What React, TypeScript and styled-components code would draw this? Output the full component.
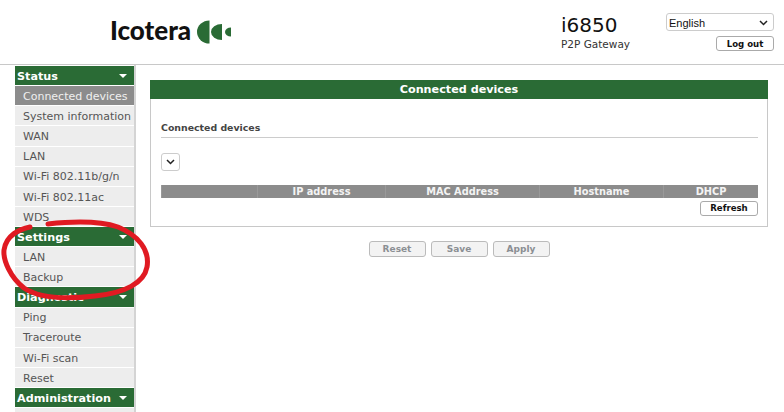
import styled, { createGlobalStyle } from "styled-components";

const GREEN = "#2a6b35";

const GlobalStyle = createGlobalStyle`
  html, body {
    margin: 0;
    padding: 0;
    height: 100%;
    overflow: hidden;
    background: #fff;
    font-family: "DejaVu Sans", Verdana, sans-serif;
    color: #444;
  }
`;

const Page = styled.div`
  position: relative;
  width: 784px;
  height: 412px;
  overflow: hidden;
`;

const Header = styled.div`
  display: flex;
  height: 64px;
  border-bottom: 1px solid #c8c8c8;
`;

const LogoBox = styled.div`
  display: flex;
  align-items: flex-start;
  gap: 5px;
  padding: 18px 0 0 110px;
  width: 561px;
  box-sizing: border-box;
`;

const LogoText = styled.div`
  font-family: "Lato", sans-serif;
  font-weight: 900;
  font-size: 26px;
  color: #111;
  line-height: 25px;
`;

const LogoMark = styled.svg`
  margin-top: 2px;
`;

const Model = styled.div`
  width: 105px;
  padding-top: 14px;
`;

const ModelName = styled.div`
  font-size: 20px;
  line-height: 22px;
  color: #111;
`;

const ModelType = styled.div`
  margin-top: 2px;
  font-size: 10.5px;
  line-height: 12px;
  color: #333;
`;

const HeaderRight = styled.div`
  display: flex;
  flex-direction: column;
  align-items: flex-end;
  width: 108px;
  padding-top: 13px;
`;

const LangSelect = styled.div`
  display: flex;
  align-items: center;
  justify-content: space-between;
  width: 108px;
  height: 18px;
  box-sizing: border-box;
  border: 1px solid #ccc;
  border-radius: 3px;
  padding: 1px 5px 0 2px;
  font-family: "Liberation Sans", sans-serif;
  font-size: 11px;
  color: #111;
`;

const Btn = styled.div<{ $off?: boolean; $w: number }>`
  display: flex;
  align-items: center;
  justify-content: center;
  box-sizing: border-box;
  width: ${(p) => p.$w}px;
  height: ${(p) => (p.$off ? 16 : 15)}px;
  border: 1px solid ${(p) => (p.$off ? "#bbb" : "#aaa")};
  border-radius: 3px;
  background: ${(p) => (p.$off ? "#f3f3f3" : "#fff")};
  color: ${(p) => (p.$off ? "#8b8f93" : "#111")};
  font-size: ${(p) => (p.$off ? 9 : 8.6)}px;
  font-weight: 700;
`;

const LogoutBtn = styled(Btn)`
  margin-top: 5px;
`;

const Body = styled.div`
  display: flex;
`;

const Sidebar = styled.div`
  flex: none;
  width: 119px;
  height: 346px;
  margin-left: 15px;
  padding-top: 1px;
  border-right: 2px solid #d4d4d4;
`;

const GroupHead = styled.div`
  display: flex;
  align-items: center;
  justify-content: space-between;
  box-sizing: border-box;
  height: 19.125px;
  margin-bottom: 1px;
  padding: 1px 7px 0 2px;
  background: ${GREEN};
  color: #fff;
  font-size: 11.2px;
  font-weight: 700;
`;

const Arrow = styled.span`
  width: 0;
  height: 0;
  border-left: 4px solid transparent;
  border-right: 4px solid transparent;
  border-top: 4px solid #fff;
`;

const Item = styled.div<{ $active?: boolean }>`
  display: flex;
  align-items: center;
  box-sizing: border-box;
  height: 19.125px;
  margin-bottom: 1px;
  padding: 1.5px 0 0 8px;
  background: ${(p) => (p.$active ? "#8c8c8c" : "#ededed")};
  color: ${(p) => (p.$active ? "#f0f0f0" : "#555")};
  font-size: 11px;
  white-space: nowrap;
`;

const Main = styled.div`
  flex: 1;
  padding: 15px 16px 0 14px;
`;

const Panel = styled.div`
  height: 147px;
  box-sizing: border-box;
  border: 1px solid #c8c8c8;
  border-top: none;
`;

const PanelTitle = styled.div`
  height: 18.5px;
  margin: 0 -1px;
  background: ${GREEN};
  color: #fff;
  text-align: center;
  font-size: 11.2px;
  font-weight: 700;
  line-height: 19px;
`;

const PanelBody = styled.div`
  padding: 22px 9px 0 10px;
`;

const SectionTitle = styled.div`
  font-size: 9.4px;
  font-weight: 700;
  line-height: 14px;
  padding-bottom: 2px;
  border-bottom: 1px solid #ccc;
  color: #444;
`;

const SmallSelect = styled.div`
  display: flex;
  align-items: center;
  justify-content: center;
  width: 19px;
  height: 18px;
  margin-top: 15px;
  box-sizing: border-box;
  border: 1px solid #ccc;
  border-radius: 3px;
`;

const TableHead = styled.div`
  display: grid;
  grid-template-columns: 96px 128px 154px 124px 1fr;
  height: 13px;
  margin-top: 14px;
  background: #8c8c8c;
`;

const HeadCell = styled.div`
  color: #f4f4f4;
  font-size: 9.8px;
  font-weight: 700;
  line-height: 13px;
  text-align: center;
  border-left: 1px solid #999;
  white-space: nowrap;
`;

const RefreshRow = styled.div`
  display: flex;
  justify-content: flex-end;
  margin-top: 3px;
`;

const Actions = styled.div`
  display: flex;
  justify-content: center;
  gap: 5px;
  margin-top: 14px;
`;

const Scribble = styled.svg`
  position: absolute;
  left: 0;
  top: 215px;
  pointer-events: none;
`;

const Chevron = () => (
  <svg width="9" height="6" viewBox="0 0 9 6">
    <path d="M1 1l3.5 3.5L8 1" fill="none" stroke="#222" strokeWidth="1.5" />
  </svg>
);

const Logo = () => (
  <LogoMark width="36" height="24" viewBox="0 0 36 24">
    <path d="M13.5 0.5A12.5 11.5 0 0 0 13.5 23.5z" fill={GREEN} />
    <path d="M26 4A11 8 0 0 0 26 20z" fill={GREEN} />
    <path d="M35 7.5A6 4.5 0 0 0 35 16.5z" fill={GREEN} />
  </LogoMark>
);

const groups = [
  { title: "Status", items: ["Connected devices", "System information", "WAN", "LAN", "Wi-Fi 802.11b/g/n", "Wi-Fi 802.11ac", "WDS"] },
  { title: "Settings", items: ["LAN", "Backup"] },
  { title: "Diagnostic", items: ["Ping", "Traceroute", "Wi-Fi scan", "Reset"] },
  { title: "Administration", items: [""] },
];

const columns = ["", "IP address", "MAC Address", "Hostname", "DHCP"];

export default function App() {
  return (
    <Page>
      <GlobalStyle />
      <Header>
        <LogoBox>
          <LogoText>Icotera</LogoText>
          <Logo />
        </LogoBox>
        <Model>
          <ModelName>i6850</ModelName>
          <ModelType>P2P Gateway</ModelType>
        </Model>
        <HeaderRight>
          <LangSelect>
            English
            <Chevron />
          </LangSelect>
          <LogoutBtn $w={58}>Log out</LogoutBtn>
        </HeaderRight>
      </Header>
      <Body>
        <Sidebar>
          {groups.map((g) => (
            <div key={g.title}>
              <GroupHead>
                {g.title}
                <Arrow />
              </GroupHead>
              {g.items.map((item) => (
                <Item key={item} $active={item === "Connected devices"}>
                  {item}
                </Item>
              ))}
            </div>
          ))}
        </Sidebar>
        <Main>
          <Panel>
            <PanelTitle>Connected devices</PanelTitle>
            <PanelBody>
              <SectionTitle>Connected devices</SectionTitle>
              <SmallSelect>
                <Chevron />
              </SmallSelect>
              <TableHead>
                {columns.map((c) => (
                  <HeadCell key={c}>{c}</HeadCell>
                ))}
              </TableHead>
              <RefreshRow>
                <Btn $w={58}>Refresh</Btn>
              </RefreshRow>
            </PanelBody>
          </Panel>
          <Actions>
            <Btn $off $w={57}>Reset</Btn>
            <Btn $off $w={57}>Save</Btn>
            <Btn $off $w={57}>Apply</Btn>
          </Actions>
        </Main>
      </Body>
      <Scribble width="160" height="95" viewBox="0 0 160 95">
        <path
          d="M48 9C75 6 100 6 118 12C138 20 150 35 147 52C144 68 125 78 95 81C70 84 40 84 24 73C10 62 3 45 4 35C6 20 20 14 30 12"
          fill="none"
          stroke="#e01a22"
          strokeWidth="5"
          strokeLinecap="round"
        />
      </Scribble>
    </Page>
  );
}
